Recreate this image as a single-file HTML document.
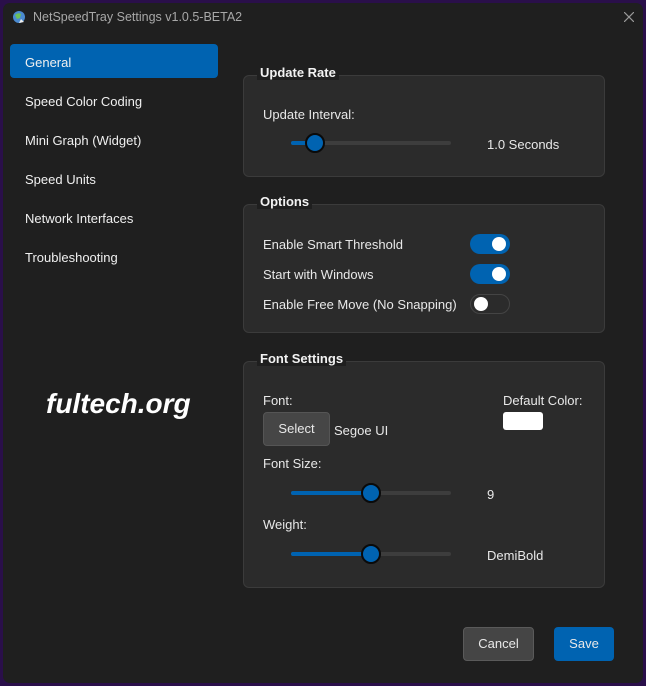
<!DOCTYPE html>
<html><head><style>
*{box-sizing:border-box;margin:0;padding:0}
body{width:646px;height:686px;background:#2a0f4a;font-family:"Liberation Sans",sans-serif;color:#e8e8e8;font-size:13px;position:relative;overflow:hidden}
.win{position:absolute;left:3px;top:3px;width:640px;height:680px;background:#1f1f1f;border-radius:7px}
.a{position:absolute;white-space:nowrap}
.nav{left:25px;font-size:13px;color:#f0f0f0}
.box{position:absolute;left:243px;width:362px;background:#2b2b2b;border:1px solid #3b3b3b;border-radius:6px}
.ttl{position:absolute;left:257px;font-weight:bold;font-size:13px;color:#f2f2f2;background:#1f1f1f;padding:0 3px}
.track{position:absolute;left:291px;width:160px;height:4px;background:#3d3d3d;border-radius:2px}
.fill{position:absolute;left:0;top:0;height:4px;background:#0063b1;border-radius:2px}
.thumb{position:absolute;width:20px;height:20px;border-radius:50%;background:#0063b1;border:2px solid #0a0a0a;top:-8px}
.tg{position:absolute;left:470px;width:40px;height:20px;border-radius:10px;background:#0063b1}
.tg i{position:absolute;top:3px;width:14px;height:14px;border-radius:50%;background:#fff}
.btn{position:absolute;border-radius:4px;text-align:center;font-size:13px}
</style></head><body>
<div class="win">
</div>
<svg class="a" style="left:12px;top:10px" width="14" height="14" viewBox="0 0 14 14"><circle cx="7" cy="7" r="6" fill="#4a8ad0"/><path d="M3 5 Q6 2 9 4 L8 8 L5 9 Z" fill="#6cbf5a"/><path d="M9 9 L12 12 L7 13 Z" fill="#eee"/></svg>
<div class="a" style="left:33px;top:10px;font-size:12.5px;color:#a8a8a8">NetSpeedTray Settings v1.0.5-BETA2</div>
<svg class="a" style="left:624px;top:12px" width="10" height="10" viewBox="0 0 10 10"><path d="M0 0L10 10M10 0L0 10" stroke="#999" stroke-width="1.2"/></svg>
<div class="a" style="left:10px;top:44px;width:208px;height:34px;background:#0063b1;border-radius:4px"></div>
<div class="a nav" style="top:55px">General</div>
<div class="a nav" style="top:94px">Speed Color Coding</div>
<div class="a nav" style="top:133px">Mini Graph (Widget)</div>
<div class="a nav" style="top:172px">Speed Units</div>
<div class="a nav" style="top:211px">Network Interfaces</div>
<div class="a nav" style="top:250px">Troubleshooting</div>
<div class="a" style="left:46px;top:388px;font-size:28px;font-weight:bold;font-style:italic;color:#fff">fultech.org</div>

<div class="box" style="top:75px;height:102px"></div>
<div class="ttl" style="top:65px">Update Rate</div>
<div class="a" style="left:263px;top:107px">Update Interval:</div>
<div class="track" style="top:141px"><div class="fill" style="width:24px"></div><div class="thumb" style="left:14px"></div></div>
<div class="a" style="left:487px;top:137px">1.0 Seconds</div>

<div class="box" style="top:204px;height:129px"></div>
<div class="ttl" style="top:194px">Options</div>
<div class="a" style="left:263px;top:237px">Enable Smart Threshold</div>
<div class="tg" style="top:234px"><i style="left:22px"></i></div>
<div class="a" style="left:263px;top:267px">Start with Windows</div>
<div class="tg" style="top:264px"><i style="left:22px"></i></div>
<div class="a" style="left:263px;top:297px">Enable Free Move (No Snapping)</div>
<div class="tg" style="top:294px;background:#2b2b2b;border:1px solid #444"><i style="left:3px;top:2px"></i></div>

<div class="box" style="top:361px;height:227px"></div>
<div class="ttl" style="top:351px">Font Settings</div>
<div class="a" style="left:263px;top:393px">Font:</div>
<div class="btn" style="left:263px;top:412px;width:67px;height:34px;background:#464646;border:1px solid #555;line-height:32px">Select</div>
<div class="a" style="left:334px;top:423px">Segoe UI</div>
<div class="a" style="left:503px;top:393px">Default Color:</div>
<div class="a" style="left:503px;top:412px;width:40px;height:18px;background:#fff;border-radius:3px"></div>
<div class="a" style="left:263px;top:456px">Font Size:</div>
<div class="track" style="top:491px"><div class="fill" style="width:80px"></div><div class="thumb" style="left:70px"></div></div>
<div class="a" style="left:487px;top:487px">9</div>
<div class="a" style="left:263px;top:517px">Weight:</div>
<div class="track" style="top:552px"><div class="fill" style="width:80px"></div><div class="thumb" style="left:70px"></div></div>
<div class="a" style="left:487px;top:548px">DemiBold</div>

<div class="btn" style="left:463px;top:627px;width:71px;height:34px;background:#454545;border:1px solid #5a5a5a;line-height:32px">Cancel</div>
<div class="btn" style="left:554px;top:627px;width:60px;height:34px;background:#0063b1;line-height:34px">Save</div>
</body></html>
